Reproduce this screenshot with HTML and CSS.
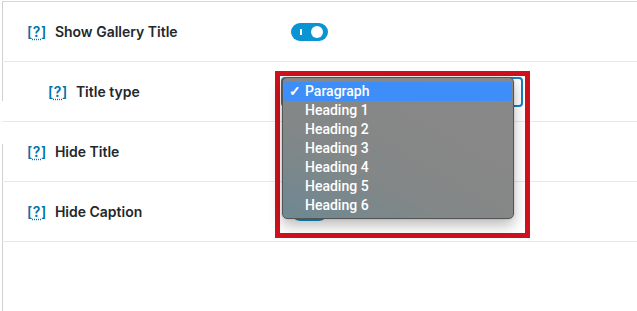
FILE: index.html
```html
<!DOCTYPE html>
<html>
<head>
<meta charset="utf-8">
<link rel="stylesheet" href="styles.css">
</head>
<body>
<div class="panel">
  <div class="row">
    <div class="label"><a class="help" href="#">[<u>?</u>]</a><span>Show Gallery Title</span></div>
    <div class="control"><span class="toggle"><i class="bar"></i><i class="knob"></i></span></div>
  </div>
  <div class="row sub">
    <div class="label"><a class="help" href="#">[<u>?</u>]</a><span>Title type</span></div>
    <div class="control"><div class="select"><span class="arrow">⌄</span></div></div>
  </div>
  <div class="row">
    <div class="label"><a class="help" href="#">[<u>?</u>]</a><span>Hide Title</span></div>
    <div class="control"><span class="toggle"><i class="bar"></i><i class="knob"></i></span></div>
  </div>
  <div class="row">
    <div class="label"><a class="help" href="#">[<u>?</u>]</a><span>Hide Caption</span></div>
    <div class="control"><span class="toggle"><i class="bar"></i><i class="knob"></i></span></div>
  </div>
</div>
<div class="highlight"></div>
<ul class="menu">
  <li class="active"><span class="check">✓</span>Paragraph</li>
  <li>Heading 1</li>
  <li>Heading 2</li>
  <li>Heading 3</li>
  <li>Heading 4</li>
  <li>Heading 5</li>
  <li>Heading 6</li>
</ul>
</body>
</html>
```
FILE: styles.css
```css
html, body {
  margin: 0;
  padding: 0;
  background: #fff;
}
body {
  font-family: Inter, Roboto, "Liberation Sans", sans-serif;
  height: 311px;
  overflow: hidden;
  position: relative;
}
.panel {
  margin: 1px 0 0 2px;
  border-top: 1px solid #d6d6d6;
  background: linear-gradient(to bottom, #d0d0d0 0, #d0d0d0 99px, transparent 99px, transparent 142px, #d0d0d0 142px) no-repeat left top / 1px 100%;
  height: 320px;
}
.row {
  display: grid;
  grid-template-columns: 279px 1fr;
  align-items: center;
  height: 59px;
  border-bottom: 1px solid #e8e8e8;
}
.label {
  display: flex;
  align-items: center;
  gap: 8px;
  padding-left: 25px;
  font-size: 14px;
  font-weight: 600;
  color: #23282d;
}
.sub .label {
  padding-left: 46px;
}
.help {
  color: #0073aa;
  text-decoration: none;
  font-weight: 600;
  font-size: 14px;
  letter-spacing: 0.6px;
}
.help u {
  text-decoration: underline dotted;
  text-underline-offset: 2px;
}
.control {
  display: flex;
  align-items: center;
}
.toggle {
  position: relative;
  display: inline-block;
  width: 37px;
  height: 18px;
  border-radius: 9px;
  background: #0a94d3;
  margin-left: 10px;
}
.toggle .bar {
  position: absolute;
  left: 9px;
  top: 6px;
  width: 2px;
  height: 6px;
  background: #fff;
}
.toggle .knob {
  position: absolute;
  right: 5px;
  top: 3px;
  width: 12px;
  height: 12px;
  border-radius: 50%;
  background: #fff;
}
.select {
  position: relative;
  width: 238px;
  height: 26px;
  border: 2px solid #1a7ec0;
  border-radius: 4px;
  background: #fff;
}
.arrow {
  position: absolute;
  right: 6px;
  top: 2px;
  color: #666;
  font-size: 12px;
}
.highlight {
  position: absolute;
  left: 275px;
  top: 71px;
  width: 245px;
  height: 157px;
  border: 5px solid #cf111d;
}
.menu {
  position: absolute;
  left: 282px;
  top: 77px;
  width: 230px;
  margin: 0;
  padding: 4px 0 3px;
  list-style: none;
  border: 1px solid #545454;
  border-radius: 5px;
  background: linear-gradient(30deg, #6e8892 0%, #838787 35%, #878787 60%, #888 100%);
  box-shadow: 0 6px 14px rgba(0,0,0,0.28), 0 0 2px rgba(0,0,0,0.2);
  font-family: Roboto, "Liberation Sans", sans-serif;
}
.menu li {
  position: relative;
  height: 19px;
  line-height: 18px;
  padding-left: 21px;
  margin: 0 1px;
  color: #fff;
  font-size: 14px;
  font-weight: 500;
}
.menu li.active {
  background: #3d8ef8;
  border-radius: 2px;
}
.check {
  position: absolute;
  left: 5px;
  top: 0;
  font-size: 14px;
  font-weight: 700;
}
```
